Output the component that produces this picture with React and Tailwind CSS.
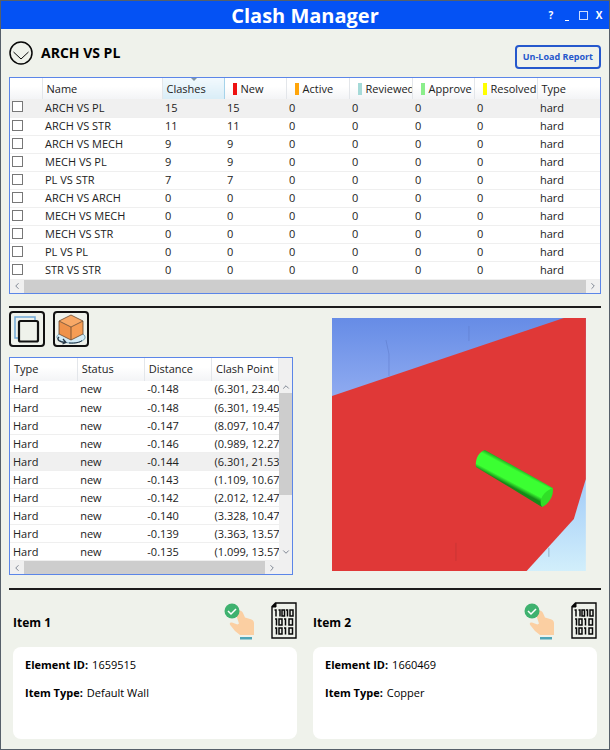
import { useState } from 'react';
import { ChevronDown, ChevronLeft, ChevronRight, ChevronUp } from 'lucide-react';

const tests = [
  { name: 'ARCH VS PL', clashes: 15 },
  { name: 'ARCH VS STR', clashes: 11 },
  { name: 'ARCH VS MECH', clashes: 9 },
  { name: 'MECH VS PL', clashes: 9 },
  { name: 'PL VS STR', clashes: 7 },
  { name: 'ARCH VS ARCH', clashes: 0 },
  { name: 'MECH VS MECH', clashes: 0 },
  { name: 'MECH VS STR', clashes: 0 },
  { name: 'PL VS PL', clashes: 0 },
  { name: 'STR VS STR', clashes: 0 },
];

const statuses = [
  { label: 'New', color: 'bg-[#ee1111]' },
  { label: 'Active', color: 'bg-[#ffa50a]' },
  { label: 'Reviewed', color: 'bg-[#a5dad8]' },
  { label: 'Approve', color: 'bg-[#8bee8b]' },
  { label: 'Resolved', color: 'bg-[#ffff00]' },
];

const clashes = [
  { distance: '-0.148', point: '(6.301, 23.40' },
  { distance: '-0.148', point: '(6.301, 19.45' },
  { distance: '-0.147', point: '(8.097, 10.47' },
  { distance: '-0.146', point: '(0.989, 12.27' },
  { distance: '-0.144', point: '(6.301, 21.53' },
  { distance: '-0.143', point: '(1.109, 10.67' },
  { distance: '-0.142', point: '(2.012, 12.47' },
  { distance: '-0.140', point: '(3.328, 10.47' },
  { distance: '-0.139', point: '(3.363, 13.57' },
  { distance: '-0.135', point: '(1.099, 13.57' },
];

const items = [
  { title: 'Item 1', id: '1659515', type: 'Default Wall' },
  { title: 'Item 2', id: '1660469', type: 'Copper' },
];

const headCell =
  'overflow-hidden whitespace-nowrap border-r border-[#e3e6ea] px-1 text-left font-normal';
const cell = 'overflow-hidden whitespace-nowrap px-[3px]';

function HorizontalScrollbar() {
  return (
    <div className="flex h-[13px] items-center bg-[#f0f0f0] text-gray-500">
      <ChevronLeft className="mx-0.5 size-2.5" />
      <div className="h-full flex-1 bg-[#cdcdcd]" />
      <ChevronRight className="mx-0.5 size-2.5" />
    </div>
  );
}

function TitleBar() {
  return (
    <header className="grid h-7 grid-cols-[1fr_auto_1fr] items-center bg-[#0452f4] text-white">
      <h1 className="col-start-2 pt-0.5 text-xl leading-6 font-bold">Clash Manager</h1>
      <div className="flex items-center justify-end gap-1 pr-1 text-[10px] leading-3 font-bold">
        <button type="button" className="w-3">?</button>
        <button type="button" aria-label="Minimize" className="flex h-3 w-3 items-end justify-center">
          <span className="h-px w-1 bg-white" />
        </button>
        <button type="button" aria-label="Maximize" className="grid w-3 place-items-center">
          <span className="size-[9px] border border-white/80" />
        </button>
        <button type="button" aria-label="Close" className="w-3">X</button>
      </div>
    </header>
  );
}

function TestsTable() {
  const [checked, setChecked] = useState([]);

  const toggle = (name) =>
    setChecked((prev) => (prev.includes(name) ? prev.filter((n) => n !== name) : [...prev, name]));

  return (
    <div className="border border-[#5b86e8] bg-white">
      <table className="w-full table-fixed border-collapse text-[#222]">
        <colgroup>
          <col className="w-8" />
          <col className="w-[120px]" />
          <col className="w-[62px]" />
          <col className="w-[62px]" />
          <col className="w-[63px]" />
          <col className="w-[63px]" />
          <col className="w-[62px]" />
          <col className="w-[63px]" />
          <col />
        </colgroup>
        <thead>
          <tr className="h-[21px] bg-linear-to-b from-white from-40% to-[#f3f4f6]">
            <th className={headCell} aria-label="Selected" />
            <th className={headCell}>Name</th>
            <th className="relative border-x border-[#a5d3ea] bg-linear-to-b from-[#f2f9fd] to-[#d9edf7] px-1 text-left font-normal">
              <svg viewBox="0 0 6 3" className="absolute top-0 left-7 h-[3px] w-1.5 fill-[#8295a3]">
                <path d="M0 0h6L3 3z" />
              </svg>
              Clashes
            </th>
            {statuses.map((status) => (
              <th key={status.label} className="overflow-hidden border-r border-[#e3e6ea] pl-2 text-left font-normal">
                <span className="flex items-center gap-1 overflow-hidden whitespace-nowrap">
                  <span className={`h-3 w-1 shrink-0 ${status.color}`} />
                  {status.label}
                </span>
              </th>
            ))}
            <th className="px-1 text-left font-normal">Type</th>
          </tr>
        </thead>
        <tbody>
          {tests.map((test, i) => (
            <tr
              key={test.name}
              className={`h-[18px] border-b border-[#efefef] ${i === 0 ? 'bg-[#f0f0f0]' : 'bg-white'}`}
            >
              <td className="px-0.5">
                <input
                  type="checkbox"
                  aria-label={test.name}
                  checked={checked.includes(test.name)}
                  onChange={() => toggle(test.name)}
                  className="mb-0.5 block size-[11px] appearance-none border border-[#777] bg-white checked:bg-[#0452f4]"
                />
              </td>
              <td className={cell}>{test.name}</td>
              <td className={cell}>{test.clashes}</td>
              <td className={cell}>{test.clashes}</td>
              <td className={cell}>0</td>
              <td className={cell}>0</td>
              <td className={cell}>0</td>
              <td className={cell}>0</td>
              <td className={cell}>hard</td>
            </tr>
          ))}
        </tbody>
      </table>
      <HorizontalScrollbar />
    </div>
  );
}

function ClashesTable() {
  return (
    <div className="flex border border-[#5b86e8] bg-white">
      <div className="min-w-0 flex-1">
        <table className="w-full table-fixed border-collapse text-[#222]">
          <thead>
            <tr className="h-[23px] bg-linear-to-b from-white from-40% to-[#f3f4f6]">
              <th className={headCell}>Type</th>
              <th className={headCell}>Status</th>
              <th className={headCell}>Distance</th>
              <th className={headCell}>Clash Point</th>
            </tr>
          </thead>
          <tbody>
            {clashes.map((clash, i) => (
              <tr
                key={i}
                className={`h-[18px] border-b border-[#efefef] ${i === 4 ? 'bg-[#f0f0f0]' : 'bg-white'}`}
              >
                <td className={cell}>Hard</td>
                <td className={cell}>new</td>
                <td className={cell}>{clash.distance}</td>
                <td className="overflow-hidden pl-[3px] whitespace-nowrap">{clash.point}</td>
              </tr>
            ))}
          </tbody>
        </table>
        <HorizontalScrollbar />
      </div>
      <div className="flex w-[13px] flex-col items-center bg-[#f0f0f0] pt-[23px] pb-4 text-gray-500">
        <ChevronUp className="my-px size-2.5" />
        <div className="flex w-full flex-1 flex-col">
          <div className="h-2/3 bg-[#cdcdcd]" />
        </div>
        <ChevronDown className="my-px size-2.5" />
      </div>
    </div>
  );
}

function OverlapIcon() {
  return (
    <svg viewBox="0 0 32 32" className="size-8" fill="none">
      <path d="M24 7V4H4v21h4" stroke="#72a9d8" strokeWidth="1.5" />
      <rect x="8" y="8" width="19" height="20.500" rx="1.5" stroke="#111" strokeWidth="2.2" />
    </svg>
  );
}

function CubeIcon() {
  return (
    <svg viewBox="0 0 32 32" className="size-8" fill="none" strokeLinejoin="round">
      <path d="M4 21c-6 4 2 9 12 9s18-4 12-9" fill="#d4ecf7" stroke="#6f9fb5" strokeWidth="1" />
      <path d="M4 24c-3 3 1 5 6 5.500M8 26l3 3.500-3.500 1.500" stroke="#263746" strokeWidth="1.300" />
      <path d="M14 30c6 .5 11-.5 13-2.500" stroke="#263746" strokeWidth="1" />
      <path d="M16 2l12 6-12 6L4 8z" fill="#f8a967" />
      <path d="M4 8l12 6v13L4 21z" fill="#ef924b" />
      <path d="M28 8l-12 6v13l12-6z" fill="#f69d55" />
      <path d="M16 2l12 6v13l-12 6-12-6V8zM4 8l12 6 12-6M16 14v13" stroke="#68472f" strokeWidth=".8" />
    </svg>
  );
}

function PickIcon() {
  return (
    <svg viewBox="0 0 32 38" className="h-[38px] w-8">
      <path
        d="M15 9c2-1.500 4 0 5 2l2 4.500 5 1.500c2 .5 4 1.500 4 4v12H17l-5-4-4-5c-2-2-1.500-4 1-3.500l5.500 2 1.500-1-3-9z"
        fill="#fbcfa2"
      />
      <path d="M17 35h12v2.500H17z" fill="#4fa5b6" />
      <circle cx="9" cy="9" r="7.500" fill="#3fb26f" />
      <path d="M5 9l3 3 5-5" fill="none" stroke="#fff" strokeWidth="1.500" />
    </svg>
  );
}

function BinaryIcon() {
  return (
    <svg viewBox="0 0 26 37" className="h-[37px] w-[26px]" fill="none" stroke="#080808">
      <path d="M4.500 1H25v35H1V4.500z" strokeWidth="1.400" />
      <path d="M1 5l4-4v4z" fill="#080808" />
      <g strokeWidth="1.500">
        <path d="M3.500 8H5v6.500M7.500 8H9v6.500M15 8h1.500v6.500" />
        <path d="M11 8h2.500v6H11zM19 8h3v6h-3z" />
        <path d="M4 17h1.500v6.500M13 17h1.500v6.500" />
        <path d="M8 17h3v6H8zM18 17h3.500v6H18z" />
        <path d="M4 26h1.500v6.500M13 26h1.500v6.500" />
        <path d="M8 26h3v6H8zM18 26h3.500v6H18z" />
      </g>
    </svg>
  );
}

function ModelView() {
  return (
    <svg viewBox="0 0 254 254" className="block w-full" role="img" aria-label="Clash model view">
      <defs>
        <linearGradient id="sky" x1="0" y1="0" x2="0" y2="1">
          <stop offset="0" stopColor="#668ce6" />
          <stop offset=".3" stopColor="#8eaaf0" />
          <stop offset=".65" stopColor="#a4cdf8" />
          <stop offset="1" stopColor="#d2effb" />
        </linearGradient>
        <linearGradient id="pipe" gradientUnits="userSpaceOnUse" x1="188" y1="149" x2="178" y2="168">
          <stop offset="0" stopColor="#168a18" />
          <stop offset=".25" stopColor="#3bff32" />
          <stop offset=".8" stopColor="#3bff32" />
          <stop offset="1" stopColor="#168a18" />
        </linearGradient>
      </defs>
      <path d="M0 0h254v254H0z" fill="url(#sky)" />
      <path d="M54 22l3 14v22M137 8v15" stroke="#5c78c6" strokeOpacity=".5" strokeWidth="1" fill="none" />
      <path d="M0 78L232 0h22v161l-12 40-48 53H0z" fill="#e03837" />
      <path d="M124 225v18" stroke="#c93435" />
      <path d="M217 230v9" stroke="#8fb0c8" />
      <path d="M153 132l68 38-11 19-66-40c-1-8 3-15 9-17z" fill="url(#pipe)" />
      <path d="M221 170c1 8-4 16-11 19-4-7 2-16 11-19z" fill="#30df27" />
    </svg>
  );
}

function ItemPanel({ item }) {
  return (
    <section>
      <div className="flex h-[45px] items-center justify-between">
        <h3 className="pt-1 text-xs font-bold">{item.title}</h3>
        <div className="flex items-center gap-4">
          <button type="button" aria-label={`Select ${item.title}`}>
            <PickIcon />
          </button>
          <button type="button" aria-label={`${item.title} properties`}>
            <BinaryIcon />
          </button>
        </div>
      </div>
      <dl className="mt-1 flex min-h-[92px] flex-col gap-3 rounded-lg bg-white px-3 py-2.5">
        <div className="flex gap-1 leading-4">
          <dt className="font-bold">Element ID:</dt>
          <dd>{item.id}</dd>
        </div>
        <div className="flex gap-1 leading-4">
          <dt className="font-bold">Item Type:</dt>
          <dd>{item.type}</dd>
        </div>
      </dl>
    </section>
  );
}

export default function App() {
  return (
    <div className="min-h-screen border border-[#56606a] bg-[#eff2eb] font-['Open_Sans','Noto_Sans',sans-serif] text-[11px] leading-4 text-black">
      <TitleBar />
      <main className="px-2">
        <div className="flex h-12 items-center justify-between">
          <div className="flex items-center gap-2">
            <button type="button" aria-label="Collapse">
              <svg viewBox="0 0 24 24" className="size-6" fill="none" stroke="#080808">
                <circle cx="12" cy="12" r="11" strokeWidth="1.500" />
                <path d="M4.500 11l7.500 7 7.500-7" strokeWidth="1" />
              </svg>
            </button>
            <h2 className="text-sm font-bold">ARCH VS PL</h2>
          </div>
          <button
            type="button"
            className="mt-2 h-6 rounded-sm border-2 border-[#2558cc] px-1.5 text-[9px] font-bold text-[#2558cc]"
          >
            Un-Load Report
          </button>
        </div>

        <TestsTable />

        <div className="mt-3 border-t-2 border-[#1c1c1c]" />

        <div className="flex">
          <div className="w-12/25 pt-[3px]">
            <div className="flex gap-2">
              <button type="button" aria-label="Overlap view" className="grid size-9 place-items-center rounded-sm border-2 border-[#111]">
                <OverlapIcon />
              </button>
              <button type="button" aria-label="3D view" className="grid size-9 place-items-center rounded-sm border-2 border-[#111]">
                <CubeIcon />
              </button>
            </div>
            <div className="mt-2.5">
              <ClashesTable />
            </div>
          </div>
          <div className="flex-1 pt-2.5 pr-[15px] pl-[39px]">
            <ModelView />
          </div>
        </div>

        <div className="mt-[13px] border-t-2 border-[#1c1c1c]" />

        <div className="grid grid-cols-2 gap-4 px-1 pt-2 pb-2.5">
          {items.map((item) => (
            <ItemPanel key={item.title} item={item} />
          ))}
        </div>
      </main>
    </div>
  );
}
